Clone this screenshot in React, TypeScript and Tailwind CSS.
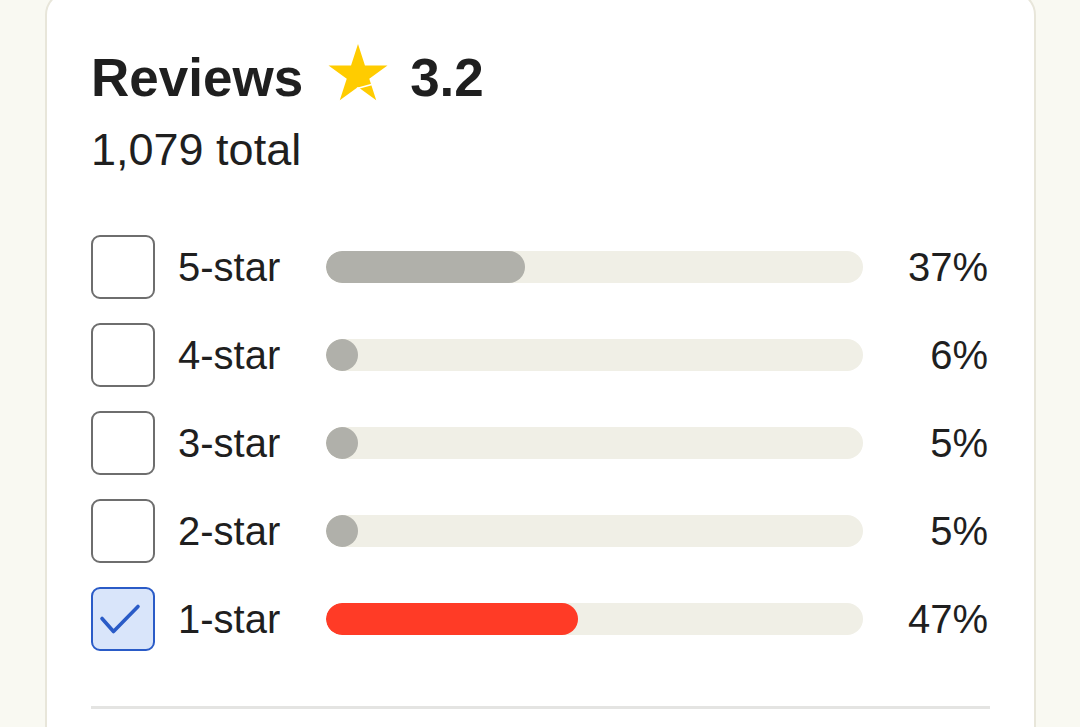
import React from "react";

type Row = { label: string; pct: number; checked?: boolean };

const ROWS: Row[] = [
  { label: "5-star", pct: 37 },
  { label: "4-star", pct: 6 },
  { label: "3-star", pct: 5 },
  { label: "2-star", pct: 5 },
  { label: "1-star", pct: 47, checked: true },
];

function Star() {
  return (
    <svg width="62" height="58" viewBox="0 0 60 56" className="shrink-0">
      <polygon
        points="30,0 36.74,20.73 58.53,20.73 40.9,33.54 47.63,54.27 30,41.46 12.37,54.27 19.1,33.54 1.47,20.73 23.26,20.73"
        fill="#ffcc00"
      />
      <line x1="29" y1="43" x2="45" y2="38.6" stroke="#ffffff" strokeWidth="1.5" />
    </svg>
  );
}

function Checkbox({ checked }: { checked?: boolean }) {
  if (checked) {
    return (
      <div className="flex h-16 w-16 shrink-0 items-center justify-center rounded-[9px] border-2 border-[#2a5bc7] bg-[#d9e5fa]">
        <svg width="64" height="64" viewBox="0 0 64 64" className="-m-[2px]">
          <path
            d="M11 31.5 L22.5 44.5 L47 19.5"
            fill="none"
            stroke="#2a5bc7"
            strokeWidth="3.6"
            strokeLinecap="round"
            strokeLinejoin="round"
          />
        </svg>
      </div>
    );
  }
  return <div className="h-16 w-16 shrink-0 rounded-[9px] border-2 border-[#6e6e6e] bg-white" />;
}

export default function App() {
  return (
    <div
      className="h-[727px] overflow-hidden bg-[#f9f9f2] pl-[45px] pr-[44px] text-[#1f1f1f]"
      style={{ fontFamily: '"Liberation Sans", Arial, sans-serif' }}
    >
      <div className="-mt-[9px] rounded-[24px] border-2 border-[#e8e6da] bg-white pl-[44px] pr-[44px] pt-[58px] pb-10">
        {/* header */}
        <div className="flex h-[54px] items-center">
          <h1 className="text-[53px] font-bold leading-[54px]">Reviews</h1>
          <div className="mb-[10px] ml-[24px] mr-[21px]">
            <Star />
          </div>
          <span className="text-[53px] font-bold leading-[54px]">3.2</span>
        </div>
        <p className="mt-[22px] text-[45px] leading-[45px]">1,079 total</p>

        {/* breakdown */}
        <div className="mt-[63px] flex flex-col gap-6">
          {ROWS.map((r) => (
            <div key={r.label} className="flex h-16 items-center">
              <Checkbox checked={r.checked} />
              <span className="ml-[23px] w-[148px] shrink-0 text-[40px] leading-[40px]">
                {r.label}
              </span>
              <div className="h-8 flex-1 overflow-hidden rounded-full bg-[#f0efe6]">
                <div
                  className={`h-8 min-w-8 rounded-full ${r.checked ? "bg-[#ff3b26]" : "bg-[#b0b0aa]"}`}
                  style={{ width: `${r.pct}%` }}
                />
              </div>
              <span className="w-[127px] shrink-0 pr-[2px] text-right text-[40px] leading-[40px]">
                {r.pct}%
              </span>
            </div>
          ))}
        </div>

        <div className="mt-[55px] h-[3px] bg-[#e4e4e2]" />
      </div>
    </div>
  );
}
